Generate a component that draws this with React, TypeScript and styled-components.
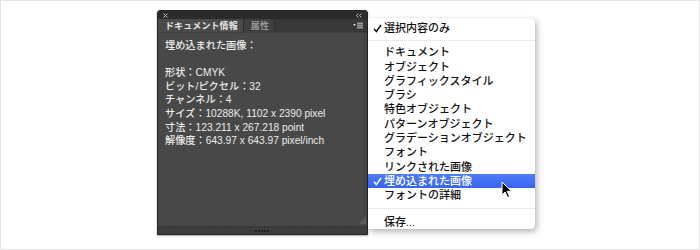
import React from "react";
import styled, { createGlobalStyle } from "styled-components";

const GlobalStyle = createGlobalStyle`
  body {
    margin: 0;
    background: #ffffff;
  }
`;

const Frame = styled.div`
  width: 700px;
  height: 250px;
  box-sizing: border-box;
  border: 1px solid #e4e4e4;
  background: #ffffff;
  display: flex;
  align-items: flex-start;
  padding: 9px 0 0 156px;
  font-family: "Liberation Sans", "Noto Sans CJK JP", sans-serif;
`;

const Panel = styled.div`
  width: 211px;
  height: 225px;
  box-sizing: border-box;
  display: flex;
  flex-direction: column;
  background: #484848;
  border: 1px solid #262626;
  border-radius: 3px 3px 0 0;
  box-shadow: 0 1px 2px rgba(0, 0, 0, 0.35);
`;

const TitleBar = styled.div`
  height: 8px;
  background: #2b2b2b;
  border-radius: 2px 2px 0 0;
  display: flex;
  align-items: center;
  justify-content: space-between;
  padding: 0 5px 0 5px;
`;

const TabRow = styled.div`
  height: 13px;
  background: #383838;
  display: flex;
  align-items: stretch;
  border-bottom: 1px solid #3d3d3d;
`;

const Tab = styled.div<{ $active?: boolean }>`
  display: flex;
  align-items: center;
  padding: 0 5px 0 7px;
  font-size: 9px;
  font-weight: bold;
  letter-spacing: 0.1px;
  color: ${(p) => (p.$active ? "#e4e4e4" : "#9a9a9a")};
  background: ${(p) => (p.$active ? "#4a4a4a" : "#3f3f3f")};
  border-right: 1px solid #2e2e2e;
`;

const TabSpacer = styled.div`
  flex: 1;
`;

const Flyout = styled.div`
  display: flex;
  align-items: center;
  padding-right: 4px;
`;

const Body = styled.div`
  flex: 1;
  position: relative;
  padding: 6px 7px 0 7px;
  color: #ececec;
  font-size: 10.2px;
  font-weight: 500;
  line-height: 13.6px;
`;

const Line = styled.div`
  height: 13.6px;
  white-space: nowrap;
`;

const Resize = styled.div`
  position: absolute;
  right: 1px;
  bottom: 2px;
  width: 0;
  height: 0;
  border-left: 7px solid transparent;
  border-bottom: 7px solid #5e5e5e;
`;

const Footer = styled.div`
  height: 7px;
  background: #3c3c3c;
  border-top: 1px dashed #333333;
  display: flex;
  align-items: center;
  justify-content: center;
`;

const Grip = styled.div`
  width: 15px;
  height: 2px;
  background: repeating-linear-gradient(
    to right,
    #1f1f1f 0 2px,
    #3c3c3c 2px 3px
  );
`;

const Menu = styled.div`
  position: relative;
  width: 167px;
  height: 211px;
  box-sizing: border-box;
  margin-top: 8px;
  padding-top: 3px;
  background: #ffffff;
  border-radius: 0 4px 4px 0;
  box-shadow: 2px 3px 6px rgba(0, 0, 0, 0.28), 0 0 1px rgba(0, 0, 0, 0.2);
  font-size: 11px;
  font-weight: 500;
  color: #111111;
`;

const Item = styled.div<{ $active?: boolean }>`
  height: 14.3px;
  line-height: 14.3px;
  display: flex;
  align-items: center;
  white-space: nowrap;
  color: ${(p) => (p.$active ? "#ffffff" : "#111111")};
  background: ${(p) =>
    p.$active ? "linear-gradient(#4f7df5, #3565ee)" : "transparent"};
`;

const Check = styled.span`
  width: 16px;
  padding-left: 2px;
  box-sizing: border-box;
  display: flex;
  justify-content: center;
`;

const Separator = styled.div<{ $h: number }>`
  height: ${(p) => p.$h}px;
  display: flex;
  align-items: center;

  &::after {
    content: "";
    flex: 1;
    border-top: 1px dotted #d8d8d8;
  }
`;

const Cursor = styled.svg`
  position: absolute;
  left: 133px;
  top: 163px;
`;

const info = [
  "埋め込まれた画像：",
  "",
  "形状：CMYK",
  "ビット/ピクセル：32",
  "チャンネル：4",
  "サイズ：10288K, 1102 x 2390 pixel",
  "寸法：123.211 x 267.218 point",
  "解像度：643.97 x 643.97 pixel/inch",
];

const items = [
  "ドキュメント",
  "オブジェクト",
  "グラフィックスタイル",
  "ブラシ",
  "特色オブジェクト",
  "パターンオブジェクト",
  "グラデーションオブジェクト",
  "フォント",
  "リンクされた画像",
  "埋め込まれた画像",
  "フォントの詳細",
];

function CheckMark({ color }: { color: string }) {
  return (
    <svg width="9" height="9" viewBox="0 0 9 9">
      <path d="M1 4.8 L3.4 7.6 L8 1" fill="none" stroke={color} strokeWidth="1.5" />
    </svg>
  );
}

function App() {
  return (
    <>
      <GlobalStyle />
      <Frame>
        <Panel>
          <TitleBar>
            <svg width="5" height="5" viewBox="0 0 5 5">
              <path d="M0.5 0.5 L4.5 4.5 M4.5 0.5 L0.5 4.5" stroke="#bdbdbd" strokeWidth="1" />
            </svg>
            <svg width="6" height="5" viewBox="0 0 6 5">
              <path d="M2.5 0.5 L0.5 2.5 L2.5 4.5 M5.5 0.5 L3.5 2.5 L5.5 4.5" fill="none" stroke="#bdbdbd" strokeWidth="1" />
            </svg>
          </TitleBar>
          <TabRow>
            <Tab $active>ドキュメント情報</Tab>
            <Tab>属性</Tab>
            <TabSpacer />
            <Flyout>
              <svg width="10" height="7" viewBox="0 0 10 7">
                <path d="M0 2 L3 2 L1.5 4 Z" fill="#cfcfcf" />
                <rect x="4" y="0" width="6" height="7" fill="#6a6a6a" />
                <path d="M4 1.5 H10 M4 3.5 H10 M4 5.5 H10" stroke="#9a9a9a" strokeWidth="1" />
              </svg>
            </Flyout>
          </TabRow>
          <Body>
            {info.map((t, i) => (
              <Line key={i}>{t}</Line>
            ))}
            <Resize />
          </Body>
          <Footer>
            <Grip />
          </Footer>
        </Panel>
        <Menu>
          <Item>
            <Check>
              <CheckMark color="#111" />
            </Check>
            選択内容のみ
          </Item>
          <Separator $h={10} />
          {items.map((t) => {
            const active = t === "埋め込まれた画像";
            return (
              <Item key={t} $active={active}>
                <Check>{active && <CheckMark color="#fff" />}</Check>
                {t}
              </Item>
            );
          })}
          <Separator $h={12} />
          <Item>
            <Check />
            保存...
          </Item>
          <Cursor width="12" height="18" viewBox="0 0 12 18">
            <path
              d="M1 1 L1 14 L4 11 L6.5 16.5 L8.5 15.6 L6.2 10.3 L10.5 10.3 Z"
              fill="#000"
              stroke="#fff"
              strokeWidth="1"
              strokeLinejoin="round"
            />
          </Cursor>
        </Menu>
      </Frame>
    </>
  );
}

export default App;
